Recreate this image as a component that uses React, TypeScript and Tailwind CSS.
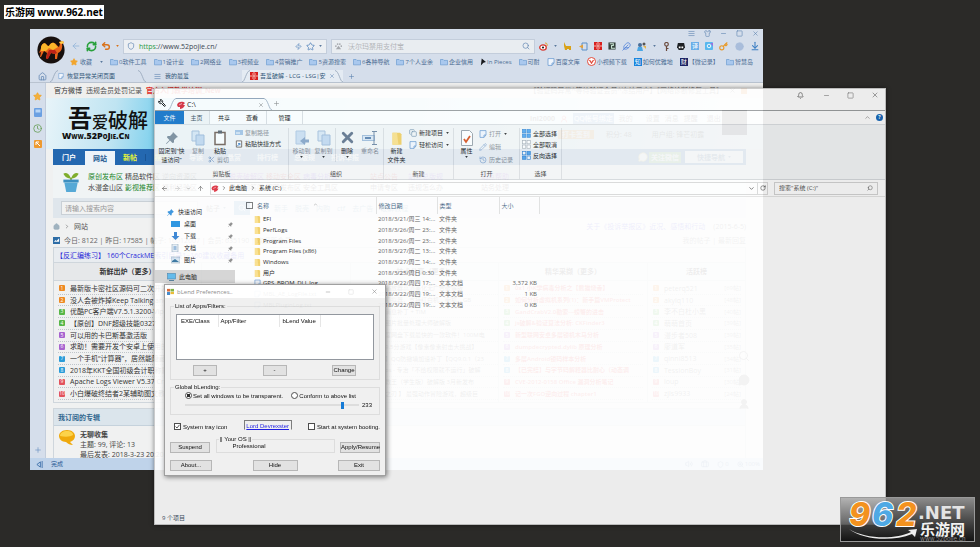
import React from "react";
import {
  AlignJustify, ArrowDownToLine, ArrowLeft, ArrowRight, ArrowUp, Bell, ChevronDown, ChevronRight, ChevronUp,
  Circle, Clock, Feather, Home, Key, Minus, Plus, RefreshCw, RotateCw, Search, Shield, Shirt, Square,
  Star, Undo2, UserRound, Volume2, Wrench, X, Zap, Copy, Scissors, Pencil, History, Briefcase, ZoomIn, MessageCircle,
} from "lucide-react";

const ui = "font-['Open_Sans','Noto_Sans_CJK_SC',sans-serif]";

/* ---------- small drawings ---------- */

function Folder({ yellow = false, className = "w-2 h-2" }: { yellow?: boolean; className?: string }) {
  return yellow ? (
    <svg viewBox="0 0 8 9" className={className}>
      <path d="M1 1h5l1 1v7H1z" fill="#f3cf63" />
      <path d="M1 1h3l1 8H1z" fill="#fbe08a" />
    </svg>
  ) : (
    <svg viewBox="0 0 9 8" className={className}>
      <path d="M.5 1.2h3l1 1h4v5H.5z" fill="#a9c8ee" stroke="#6d9cd0" strokeWidth=".8" />
    </svg>
  );
}

function Page({ className = "w-2 h-2" }: { className?: string }) {
  return (
    <svg viewBox="0 0 8 8" className={className}>
      <path d="M1 .6h6v4.4L5 7.4H1z" fill="#f1f6fd" stroke="#6d9cd0" strokeWidth=".8" />
      <path d="M7 5H5v2.4" fill="none" stroke="#6d9cd0" strokeWidth=".8" />
    </svg>
  );
}

function Caret({ className = "text-[#5a789c]" }: { className?: string }) {
  return (
    <svg viewBox="0 0 4 3" className={`h-[2px] w-[3px] shrink-0 ${className}`}>
      <path d="M0 0h4L2 3z" fill="currentColor" />
    </svg>
  );
}

function CamelLogo() {
  return (
    <svg viewBox="0 0 28 28" className="h-7 w-7">
      <circle cx="14" cy="14" r="13.6" fill="#17100e" />
      <path d="M2 17l2-5c0-3 3-6 5-4 1 1 1 2 3 2 1-2 3-4 5-3 2 0 3 3 5 4l1-3-1-2 4-1 1 2-2 1c1 4-1 8-4 9l-1 6h-2l0-5-4-1-3 5h-2l1-5-3-2-3 6H3l1-5z" fill="#e8641a" />
      <path d="M4 12c0-3 3-6 5-4 1 1 1 2 3 2 1-2 3-4 5-3 2 1 2 3 4 4l-5 3-4-2-3 3-5 0z" fill="#fbb62a" />
      <path d="M12 14l6 0 2 3-2 1-4-1-3 6h-2l1-5z" fill="#bd2317" />
      <path d="M22 6l4-1 1 2-3 1z" fill="#ffd34d" />
    </svg>
  );
}

function RedSwirl({ className = "w-2 h-2" }: { className?: string }) {
  return (
    <svg viewBox="0 0 8 8" className={className}>
      <path d="M0 4C1 0 6 0 8 2L6 4l2 0C7 7 4 8 3 8l0-2-2 0z" fill="#dc2b3a" />
      <path d="M2 4l3-1.500" stroke="#fff" strokeWidth=".6" />
    </svg>
  );
}

function RedGrid({ className = "w-2 h-2" }: { className?: string }) {
  return (
    <svg viewBox="0 0 8 8" className={className}>
      <rect width="8" height="8" fill="#d8201f" />
      <path d="M4 0v8M0 4h8M2 2h1M5 2h1M2 6h1M5 6h1" stroke="#ffdcd6" strokeWidth=".8" />
    </svg>
  );
}

function TabEdge({ left = false }: { left?: boolean }) {
  return (
    <svg viewBox="0 0 8 12" className="h-3 w-2 shrink-0">
      <path d={left ? "M0 12C3 12 4 1 8 .5" : "M0 .5C4 1 5 12 8 12"} fill="none" stroke="#93a3b8" strokeWidth=".8" />
    </svg>
  );
}

function TileIcon({ kind }: { kind: "all" | "none" | "invert" }) {
  const a = kind === "none" ? "#fff" : "#58aaf0";
  const b = kind === "all" ? "#58aaf0" : "#fff";
  const s = kind === "none" ? "#a8b0b8" : "#3b8ad6";
  return (
    <svg viewBox="0 0 9 9" className="h-[9px] w-[9px] shrink-0">
      <g stroke={s} strokeWidth=".7">
        <rect x=".5" y=".5" width="3.3" height="3.3" fill={b} />
        <rect x="5" y=".5" width="3.3" height="3.3" fill={a} />
        <rect x=".5" y="5" width="3.3" height="3.3" fill={a} />
        <rect x="5" y="5" width="3.3" height="3.3" fill={b} />
      </g>
    </svg>
  );
}

/* ---------- browser window ---------- */

const bookmarks: [string, string][] = [
  ["folder", "0软件工具"], ["folder", "1设计业"], ["folder", "2网络业"], ["folder", "3视频业"],
  ["folder", "4营销推广"], ["folder", "5资源搜索"], ["folder", "6各种导航"], ["folder", "7个人业余"],
  ["folder", "企业信用"], ["p", "In Pieces"], ["folder", "可耐"], ["page", "百度文库"],
  ["v", "小视频下载"], ["k", "如何优雅地"], ["c", "【微记录】"], ["folder", "智慧岛"],
];

function BookmarkIcon({ kind }: { kind: string }) {
  if (kind === "folder") return <Folder className="h-2 w-2 shrink-0" />;
  if (kind === "page") return <Page className="h-2 w-2 shrink-0" />;
  if (kind === "p")
    return <svg viewBox="0 0 7 8" className="h-2 w-[6px]"><path d="M1 8L2 0l5 4-3 1z" fill="#16181c" /></svg>;
  if (kind === "v")
    return <svg viewBox="0 0 9 9" className="h-[9px] w-[9px]"><circle cx="4.500" cy="4.500" r="4" fill="#fff" stroke="#e04a3a" /><path d="M2.500 3l2 3 2-3" fill="none" stroke="#e04a3a" strokeWidth="1.300" /></svg>;
  if (kind === "k") return <span className="flex h-2 w-2 items-center justify-center bg-[#1782dc] text-[6px] leading-none text-white">知</span>;
  return <span className="flex h-2 w-2 items-center justify-center bg-[#1b2365] text-[6px] leading-none text-white">财</span>;
}

function BrowserChrome() {
  return (
    <header className="bg-[#d5deeb] text-[#4b6c93]">
      <div className="flex h-[41px]">
        <div className="w-10 shrink-0 pl-[7px] pt-[7px]"><CamelLogo /></div>
        <div className="min-w-0 flex-1">
          <div className="flex h-[9px] items-center justify-end text-[#5d83b0]">
            {[AlignJustify, Shirt, Minus, Square, X].map((I, i) => (
              <button key={i} aria-label="窗口" className="flex w-4 justify-center"><I className="h-[7px] w-[7px]" /></button>
            ))}
          </div>
          <div className="flex h-4 items-center">
            <div className="flex w-[53px] shrink-0 items-center justify-between pl-px pr-1">
              <button aria-label="后退"><ArrowLeft className="h-[10px] w-[10px] text-[#94b4da]" /></button>
              <button aria-label="刷新"><RefreshCw strokeWidth={3.5} className="h-[11px] w-[11px] text-[#27a03a]" /></button>
              <button aria-label="恢复"><Undo2 strokeWidth={3.5} className="h-[10px] w-[10px] text-[#d9731c]" /></button>
              <Caret className="text-[#d9731c]" />
            </div>
            <label className="mr-1 flex h-[15px] w-[204px] shrink-0 items-center border border-[#c3cddb] bg-[#eceff3] pl-[3px] pr-1">
              <Shield className="mr-1 h-2 w-2 text-[#5d83b0]" />
              <span className="text-[7px] leading-none text-[#2d9b46]">https</span>
              <input aria-label="地址" defaultValue="://www.52pojie.cn/" className="w-20 min-w-0 flex-1 bg-transparent text-[7px] leading-none text-[#3b4652] outline-none" />
              <Zap className="h-[7px] w-[7px] text-[#4d7fb8]" />
              <Star className="mx-1 h-[9px] w-[9px] text-[#4d7fb8]" />
              <Caret />
            </label>
            <label className="flex h-[15px] w-[204px] shrink-0 items-center border border-[#c3cddb] bg-[#e9edf1] pl-[3px] pr-1">
              <svg viewBox="0 0 8 8" className="h-[7px] w-[7px]"><g fill="#a5a8ad"><circle cx="1" cy="3.500" r="1" /><circle cx="3" cy="1.200" r="1" /><circle cx="5.500" cy="1.200" r="1" /><circle cx="7.200" cy="3.500" r="1" /><path d="M4 3l3 4H1z" /></g></svg>
              <input aria-label="搜索" placeholder="沃尔玛禁用支付宝" className="ml-[6px] min-w-0 flex-1 bg-transparent text-[7px] leading-none outline-none placeholder:text-[#b3b5b9]" />
              <Search className="h-2 w-2 text-[#5d83b0]" />
            </label>
            <div className="flex flex-1 items-center justify-between pl-1 pr-[3px]">
              <svg viewBox="0 0 9 9" className="h-[9px] w-[9px]"><ellipse cx="4" cy="5.500" rx="3.300" ry="2.600" fill="#fff" stroke="#d83a32" strokeWidth="1.300" /><circle cx="4" cy="5.500" r="1.100" fill="#222" /><path d="M6 1c2 0 2.500 1 2 3" stroke="#e8a02c" fill="none" /></svg>
              <Caret />
              <svg viewBox="0 0 9 9" className="h-[9px] w-[9px]"><path d="M1 0l2 4h5v4H6V7H4v1H2L1 4z" fill="#d9a117" /></svg>
              <svg viewBox="0 0 9 9" className="h-[9px] w-[9px]"><path d="M3 1h5v7H3z" fill="none" stroke="#5b8fc8" /><path d="M0 4.500l4-2v4z" fill="#e2a03a" /></svg>
              <RedGrid className="h-2 w-2" />
              <svg viewBox="0 0 9 9" className="h-2 w-2"><rect x=".5" y=".5" width="8" height="8" fill="#34413c" /><path d="M2 2h4v2H4v3h4" fill="none" stroke="#c9e4d3" strokeWidth="1.200" /></svg>
              <Feather className="h-[9px] w-[9px] text-[#4d7fd8]" />
              <svg viewBox="0 0 9 9" className="h-[9px] w-[9px]"><circle cx="3" cy="3" r="2" fill="#4a6e98" /><circle cx="7" cy="2" r="1.500" fill="#555" /><path d="M0 9l1-4h4l1 4z" fill="#4aa7e4" /><path d="M6 4h3v3z" fill="#e3b64c" /></svg>
              <Caret />
              <svg viewBox="0 0 9 9" className="h-[9px] w-[9px]"><circle cx="4.500" cy="2.300" r="1.800" fill="none" stroke="#6b4a3c" strokeWidth="1.200" /><path d="M4.500 4v5M4.500 6.500h2" stroke="#6b4a3c" strokeWidth="1.200" /></svg>
              <svg viewBox="0 0 9 9" className="h-2 w-2"><path d="M1 1l7 0 1 5-2 3H2L0 6z" fill="#1d2024" /><path d="M2 5h2v2H2zM5 5h2v2H5z" fill="#fff" /></svg>
              <span className="flex h-2 w-2 items-center justify-center bg-[#6aaee8] text-[6px] leading-none text-white">译</span>
              <svg viewBox="0 0 9 9" className="h-2 w-2"><rect width="9" height="9" rx="1" fill="#58b8ee" /><circle cx="4.500" cy="4.500" r="2" fill="none" stroke="#fff" /><path d="M6 1h3v4z" fill="#9a6fe0" /></svg>
              <Key strokeWidth={3} className="h-[9px] w-[9px] text-[#e89a2a]" />
              <Circle className="h-[9px] w-[9px] fill-[#a9bddb] text-[#a9bddb]" />
              <ArrowDownToLine strokeWidth={2.5} className="h-[10px] w-[10px] text-[#3d7fc4]" />
            </div>
          </div>
          <nav className="flex h-[15px] items-center justify-between pr-[10px] text-[6px] leading-none">
            <a href="#fav" className="flex items-center gap-[2px]"><Star className="h-2 w-2 fill-[#f2a52c] text-[#f2a52c]" />收藏<span className="w-1" /><Caret /></a>
            {bookmarks.map(([k, t]) => (
              <a key={t} href="#b" className="flex items-center gap-px whitespace-nowrap"><BookmarkIcon kind={k} />{t}</a>
            ))}
          </nav>
        </div>
      </div>
      <div className="flex h-[13px] items-end border-b border-[#b9c3d0] text-[6px] leading-none text-[#2f5577]">
        <button aria-label="主页" className="flex h-3 w-5 items-center justify-center pl-1"><Home className="h-[9px] w-[9px] text-[#5d83b0]" /></button>
        <div className="flex h-3 w-24 items-center"><TabEdge left /><Page className="mr-[3px] h-2 w-[6px]" /><span className="flex-1">恢复异常关闭页面</span><TabEdge /></div>
        <div className="flex h-3 w-24 items-center pl-2"><AlignJustify className="mr-1 h-[7px] w-[7px] text-[#5d83b0]" /><span className="flex-1">我的最爱</span></div>
        <div className="flex h-3 w-[101px] items-center bg-[#e4ebf3]"><TabEdge left /><RedGrid className="mr-[2px] h-2 w-2 shrink-0" /><span className="flex-1 whitespace-nowrap">吾爱破解 - LCG - LSG|安</span><X className="h-[6px] w-[6px] shrink-0 text-[#5d83b0]" /><TabEdge /></div>
        <button aria-label="新标签" className="flex h-3 w-4 items-center justify-center"><Plus className="h-[7px] w-[7px] text-[#5d83b0]" /></button>
      </div>
    </header>
  );
}

const badge = ["bg-[#ee8a22]", "bg-[#ee8a22]", "bg-[#57b647]", "bg-[#57b647]", "bg-[#a763cf]", "bg-[#a763cf]", "bg-[#299bd8]", "bg-[#299bd8]", "bg-[#e2535d]", "bg-[#e2535d]"];
const fresh = ["最新版卡密社区源码可二次开发", "没人会被炸掉Keep Talking and No", "优酷PC客户端V7.5.1.3200-Vip去广", "【原创】DNF超级技能0327", "可以用的卡巴斯基激活版", "求助！需要开发个安卓上使用的软件", "一个手机“计算器”，居然能隐藏文件", "2018年KKT全国初级会计职称题库", "Apache Logs Viewer V5.37 Crack", "小白爆破终结者2某辅助图文教程"];
const tech = ["播放器高清美化无广告破解版", "模拟器，支持红白机、街机、GB", "消息补丁 + TIM", "图片批量处理大师破解版", "度网盘下载最快的一款软件！100M电", "9.5分游戏【像素像素射击大挑战】", "】QQ防撤墙加速补丁【QQ9.0.1（23", "ps - 专治「不给权限就不运行」破解", "教王（学生版）破解版 3月新发布", "之刃 】 最强动作冒险游戏，超级巨"];
const best = ["0x1 小K学病毒分析之【熊猫烧香】", "如何分析虚拟机系列(1)：新手篇VMProtect", "GandCrabV2.0勒索---螃蟹的进击", "js破解&验证算法分析: CKFinder3", "新型联网安卓多层锁机木马分析", "dumpdecrypted.dylib 原理分析", "多层Android锁码样本分析", "【已完结】与字节码解释器比耐心（动态调", "CVE-2012-0158 Office 漏洞分析笔记", "记一次FGO逆向过程 chapter1"];
const active: [string, string][] = [["peterq521", "[69帖]"], ["akylq110", "[48帖]"], ["李不白杜小黑", "[40帖]"], ["萌萌首页", "[39帖]"], ["漫步者508", "[39帖]"], ["廖道军", "[35帖]"], ["qinni8513", "[34帖]"], ["TessionBoy", "[31帖]"], ["loup", "[30帖]"], ["zjls9933", "[24帖]"]];

function RankList({ title, rows, className, text, indent }: { title: string; rows: (string | [string, string])[]; className: string; text: string; indent?: boolean }) {
  return (
    <section className={`shrink-0 border-r border-[#cfd6dc] ${className}`}>
      <h3 className="flex h-[18px] items-center justify-center border-b border-[#cfd6dc] bg-[#e6e8ea] text-[7px] font-bold text-[#333]">{title}</h3>
      <ol className={`flex h-[121px] flex-col py-[2px] ${indent ? "pl-[34px]" : "pl-1 pr-1"}`}>
        {rows.map((r, i) => (
          <li key={i} className="flex flex-1 items-center overflow-hidden border-b border-dotted border-[#bfc5ca] whitespace-nowrap">
            {!indent && <span className={`mr-[5px] ml-px flex h-[6px] w-[6px] shrink-0 items-center justify-center rounded-[1px] text-[5px] leading-none text-white ${badge[i]}`}>{i + 1}</span>}
            <a href="#t" className={`leading-none ${text}`}>{typeof r === "string" ? r : r[0]}</a>
            {typeof r !== "string" && <span className="ml-auto text-[6px] text-[#777]">{r[1]}</span>}
          </li>
        ))}
      </ol>
    </section>
  );
}

function ForumPage() {
  return (
    <main className="relative min-w-0 flex-1 overflow-hidden bg-[#f0f1f1] text-[7px] leading-none text-[#444]">
      <div className="flex h-[15px] items-center bg-[#efefee] pl-2 pr-4">
        <a href="#a" className="mr-1 text-[#333]">官方微博</a><a href="#b" className="mr-1 text-[#555]">违规会员处罚记录</a>
        <a href="#c" className="font-bold text-[#e0302a]">官方入门教学培训_New</a>
        <span className="ml-auto mr-[6px] text-[#666]">【验证码异常^等待验证会员^冻结用户】【网络诊断修复工具】</span>
        <X className="h-[7px] w-[7px]" /><span className="ml-[5px] h-[6px] w-[6px] bg-[#e6822c]" />
      </div>
      <div className="flex h-[51px] justify-between bg-[linear-gradient(100deg,#e8f4f9_0px,#bfe4f2_70px,#86d3ee_110px,#a8dff0_260px,#c9ecf6_480px,#eef6f9_700px)] pl-4 pr-4">
        <div className="pt-[9px]">
          <div className="flex items-end pl-[6px] font-['Liberation_Serif','Noto_Sans_CJK_SC',serif] leading-none text-[#111]">
            <span className="text-[24px] font-bold">吾</span><span className="text-[16px] font-medium">爱</span><span className="text-[20px] font-medium">破解</span>
          </div>
          <div className="font-['Open_Sans',sans-serif] text-[9px] font-extrabold leading-[10px] text-[#111] [font-variant:small-caps]">Www.52PoJie.Cn</div>
        </div>
        <div className="flex pt-3">
          <div className="w-[192px] pt-[3px]">
            <div className="flex items-center gap-[5px]"><b>ini2000</b><UserRound className="h-2 w-2 text-[#d33]" /><span className="bg-[#4a86c0] px-px py-[2px] text-white">QQ帐号绑定</span><span>我的</span><span className="ml-2">设置</span><span>消息</span><span>提醒</span><span className="ml-1">退出</span></div>
            <div className="mt-[6px] flex items-center pl-7"><span className="mr-3 bg-[#f29b38] px-1 py-px font-bold text-white">打卡签到</span><span className="mr-5">积分: 48</span><span>用户组: 锋芒初露</span></div>
          </div>
          <div className="h-[25px] w-[25px] bg-[#3c3a41]" />
        </div>
      </div>
      <div className="mx-[7px] mr-[17px]">
        <nav className="flex h-4 items-center bg-[#2468b0] font-bold text-white">
          <a href="#1" className="w-8 text-center">门户</a>
          <a href="#2" className="flex h-[14px] w-[30px] items-center justify-center self-end bg-[#eef4f9] text-[#245a90]">网站</a>
          <a href="#3" className="w-[30px] text-center text-[#e8f53a]">新帖</a>
          <a href="#4" className="w-8 border-l border-[#1a5596] text-center text-[#e8f53a]">搜索</a>
          <a href="#5" className="ml-3">导读</a><a href="#6" className="ml-6">悬赏</a><a href="#7" className="ml-4">排行榜</a><a href="#8" className="ml-4">总版规</a><a href="#9" className="ml-4">投诉举报</a>
          <span className="ml-auto mr-1 flex items-center"><MessageCircle className="h-[10px] w-3 fill-white text-[#e9c34c]" /><span className="bg-[#6fb55b] p-[2px]">关注微信</span></span>
          <button className="mr-[3px] flex h-3 w-[58px] items-center justify-center gap-[3px] bg-[#f5f8fb] text-[#44688c]">快捷导航<Caret /></button>
        </nav>
        <div className="flex h-[33px] items-center bg-[#f0f4f5]">
          <svg viewBox="0 0 18 22" className="ml-[9px] mr-2 h-[21px] w-[18px] shrink-0"><path d="M9 8C7 2 3 1 1 3c2 4 5 5 8 5zM9 8c2-6 6-7 8-5-2 4-5 5-8 5z" fill="#7fae2c" /><path d="M9 7v3" stroke="#6e9a25" strokeWidth="1.500" /><path d="M1 9h16v3H1z" fill="#3d8fc0" /><path d="M2 12h14l-2 10H4z" fill="#56a9d6" /></svg>
          <div className="grid grid-cols-[repeat(11,max-content)] gap-x-[2px] gap-y-1 whitespace-nowrap">
            <a href="#a" className="text-[#23852b]">原创发布区</a><a href="#b">精品软件区</a><a href="#c">逆向资源区</a><span className="w-7" />
            <a href="#d" className="text-[#a03ad8]">脱壳破解区</a><a href="#e" className="text-[#e0302a]">移动安全区</a><a href="#f" className="text-[#7a3ae8]">病毒分析区</a><span className="w-7" />
            <a href="#g" className="mr-2 text-[#e0302a]">站点公告</a><a href="#h" className="mr-9 text-[#7a3ae8]">站点总版规</a><a href="#i" className="text-[#a03ad8]">站点帮助</a>
            <a href="#j">水漫金山区</a><a href="#k" className="text-[#23852b]">影视推荐区</a><a href="#l">福利经验区</a><span />
            <a href="#m">悬赏问答区</a><a href="#n">招聘发布区</a><a href="#o">安全工具区</a><span />
            <a href="#p">申请专区</a><a href="#q">违规怎么办</a><a href="#r">站务处理</a>
          </div>
        </div>
        <div className="flex h-5 items-center bg-[#dfe6ec] pl-2">
          <input aria-label="请输入搜索内容" placeholder="请输入搜索内容" className="h-[14px] w-[137px] border border-[#c9d0d6] bg-[#f1f2f2] pl-[3px] text-[7px] outline-none placeholder:text-[#999]" />
          <span className="mx-2 flex items-center gap-[3px]">帖子<Caret /></span>
          <button aria-label="搜索" className="flex h-[14px] w-4 items-center justify-center bg-[#3a80bd] text-white"><Search className="h-2 w-2" /></button>
          <span className="ml-6 flex gap-[7px] text-[#47769c]"><span>新手</span><span>脱壳</span><span>内购</span><span>ctf</span><span>去广告</span><span>破解教程</span></span>
        </div>
        <div className="flex h-4 items-center gap-1 text-[#555]"><Home className="h-[7px] w-[7px] fill-[#9fb2bf] text-[#9fb2bf]" /><ChevronRight className="h-[7px] w-[6px]" />网站
          <span className="ml-auto text-[#3a3ad8]">关于《投诉举报区》近况、感悟和行动</span><span className="ml-1">(2015-6-5)</span></div>
        <div className="flex h-[13px] items-center whitespace-nowrap text-[#666]">
          <span className="mr-1 flex h-[7px] w-[7px] items-end bg-[#2e6da6]"><svg viewBox="0 0 8 8" className="h-2 w-2"><path d="M1 6l2-2 1 1 3-3v4z" fill="#fff" /></svg></span>
          今日: 8122 | 昨日: 17585 | 帖子: 16012607 | 会员: 635190 | 欢迎新会员<span className="ml-auto">我的帖子 | 最新回复</span>
        </div>
        <div className="flex h-4 items-center border border-[#cfd6dc] bg-[#e8ecf0] pl-[2px] text-[#2828d8]"><a href="#n">【反汇编练习】 160个CrackME索引目录1~160建议收藏备用</a></div>
        <div className="flex border-b border-l border-[#cfd6dc]">
          <RankList title="新鲜出炉（更多）" rows={fresh} className="w-[148px]" text="text-[7px] text-[#333]" />
          <div className="w-[149px] shrink-0 border-r border-[#cfd6dc]"><div className="h-[18px] bg-[#e6e8ea]" /></div>
          <RankList title="技术分享（更多）" rows={tech} className="w-[148px]" text="text-[6px] text-[#444]" indent />
          <RankList title="精华采撷（更多）" rows={best} className="w-[149px]" text="text-[6px] font-semibold text-[#e03a3a]" />
          <RankList title="活跃榜" rows={active} className="w-[98px]" text="text-[7px] text-[#555]" />
        </div>
        <section className="mt-[5px] border border-[#cfd6dc]">
          <h3 className="flex h-[17px] items-center border-b border-[#c5d2dc] bg-[#dbe5ec] pl-1 text-[7px] font-bold text-[#31678f]">我订阅的专辑</h3>
          <div className="flex pl-[5px] pt-1">
            <svg viewBox="0 0 16 15" className="mr-[5px] h-[15px] w-4"><path d="M8 0c5 0 8 3 8 6s-2 5-5 6l3 3c-3 0-5-1-7-3-4 0-7-3-7-6s3-6 8-6z" fill="#efa90c" /><path d="M8 1c4 0 6 2 6 4-3 2-8 2-13 1 0-3 3-5 7-5z" fill="#fcd34a" /></svg>
            <div className="leading-[10px]"><b className="block">无聊收集</b><span className="block">主题: 99, 评论: 13</span><span className="block">最后发表: 2018-3-23 20:20</span></div>
          </div>
        </section>
      </div>
      <div className="absolute right-[13px] bottom-[48px] flex flex-col gap-3 text-[#777]"><Search className="h-3 w-3" /><MessageCircle className="h-3 w-3 fill-current" /><UserRound className="h-3 w-3 fill-current" /></div>
    </main>
  );
}

function Browser() {
  return (
    <div className={`absolute left-[30px] top-[29px] flex h-[441px] w-[733px] flex-col overflow-hidden bg-[#d5deeb] ${ui}`}>
      <BrowserChrome />
      <div className="flex min-h-0 flex-1">
        <aside className="flex w-4 shrink-0 flex-col items-center gap-[7px] border-r border-[#c3cddb] pb-1 pt-[9px]">
          <Star className="h-[9px] w-[9px] fill-[#f2b03c] text-[#f2a52c]" />
          <svg viewBox="0 0 8 9" className="h-[9px] w-2"><rect width="8" height="9" rx="1" fill="#6ba0e2" /><path d="M1.500 1.500h5v3h-5z" fill="#b9d6f6" /></svg>
          <Clock className="h-[9px] w-[9px] text-[#5d9a4a]" />
          <svg viewBox="0 0 8 8" className="h-2 w-2"><rect width="8" height="8" rx="1" fill="#ee9a30" /><path d="M2 2l4 4M2 5V2h3" stroke="#fff" fill="none" /></svg>
          <Plus className="mt-auto h-2 w-2 text-[#6b93c2]" />
        </aside>
        <ForumPage />
      </div>
      <footer className="flex h-3 items-center bg-[#bfd3ea] pl-[6px] pr-[3px] text-[6px] leading-none text-[#2a5a94]">
        <svg viewBox="0 0 8 8" className="mr-2 h-[7px] w-[7px]"><path d="M5 1v6L1 4zM7 0v8" fill="none" stroke="#3b6ea8" /></svg>完成
        <div className="ml-auto flex items-center gap-2"><Volume2 className="h-2 w-2" /><Briefcase className="h-2 w-2" /><span className="flex"><Shield className="mr-px h-[7px] w-[7px]" />0</span><span className="flex"><ZoomIn className="mr-px h-[7px] w-[7px]" />100%</span></div>
      </footer>
    </div>
  );
}

/* ---------- file explorer window ---------- */

function BigButton({ icon, label, dim, caret, className }: { icon: React.ReactNode; label: string; dim?: boolean; caret?: boolean; className: string }) {
  return (
    <button className={`flex shrink-0 flex-col items-center text-[6px] leading-[9px] ${dim ? "text-[#8c9197]" : "text-[#222]"} ${className}`}>
      <span className="flex h-[19px] items-center">{icon}</span>
      <span className="whitespace-pre-line">{label}</span>
      {caret && <Caret className="text-[#333]" />}
    </button>
  );
}

function SmallButton({ icon, label, dim, caret }: { icon: React.ReactNode; label: string; dim?: boolean; caret?: boolean }) {
  return (
    <button className={`flex items-center gap-[2px] whitespace-nowrap text-[6px] leading-none ${dim ? "text-[#8c9197]" : "text-[#222]"}`}>
      {icon}{label}{caret && <Caret className="ml-px text-[#333]" />}
    </button>
  );
}

function Group({ title, className, children }: { title: string; className: string; children: React.ReactNode }) {
  return (
    <div className={`flex shrink-0 flex-col border-r border-[#dcdfe2] ${className}`}>
      <div className="flex min-h-0 flex-1">{children}</div>
      <div className="h-[9px] text-center text-[6px] leading-[9px] text-[#444]">{title}</div>
    </div>
  );
}

/* The push pin that marks quick-access entries. */
function PinIcon({ className }: { className: string }) {
  return (
    <svg viewBox="0 0 12 12" className={className}>
      <path d="M7 0l5 5-1.500.5-2.500 2.500v2.500L6.500 11 4 8.500.5 12 0 11.500 3.500 8 1 5.500 1.500 4H4l2.500-2.500z" fill="currentColor" />
    </svg>
  );
}

function Ribbon() {
  const copy = <svg viewBox="0 0 14 16" className="h-4 w-[14px]"><path d="M1 1h7v10H1z" fill="#dbe8f5" stroke="#a9c1dc" /><path d="M5 5h8v10H5z" fill="#c6daf0" stroke="#a2bddb" /></svg>;
  return (
    <div className="flex h-[55px] shrink-0 border-b border-[#d5d9dc] bg-[#f4f6f7] pt-[3px]">
      <Group title="剪贴板" className="w-[134px]">
        <BigButton className="w-[33px]" icon={<PinIcon className="h-3 w-3 text-[#7f8e9c]" />} label={"固定到“快\n速访问”"} />
        <BigButton className="w-5" dim icon={copy} label="复制" />
        <div className="w-6 shrink-0">
          <BigButton className="w-6" icon={<svg viewBox="0 0 12 15" className="h-4 w-3"><path d="M1 2h10v12H1z" fill="#fff" stroke="#76645a" strokeWidth="1.500" /><path d="M4 0h4v3H4z" fill="#5d6670" /></svg>} label="粘贴" />
          <SmallButton dim icon={<Scissors className="h-[7px] w-[7px] text-[#7d9cc4]" />} label="剪切" />
        </div>
        <div className="flex flex-col gap-1 pl-[3px] pt-[2px]">
          <SmallButton dim icon={<svg viewBox="0 0 8 6" className="h-[6px] w-2"><rect width="8" height="5" fill="#a8c6e6" /><path d="M1 3h4" stroke="#fff" /></svg>} label="复制路径" />
          <SmallButton icon={<svg viewBox="0 0 8 9" className="h-2 w-2"><path d="M1 1h6v7H1z" fill="#fff" stroke="#6b5f56" /><path d="M2 7l3-3M3 4h2v2" stroke="#2b74c4" fill="none" /></svg>} label="粘贴快捷方式" />
        </div>
      </Group>
      <Group title="组织" className="w-[95px]">
        <BigButton className="ml-[2px] w-[21px]" dim caret icon={<svg viewBox="0 0 15 16" className="h-4 w-[15px]"><path d="M2 1h9v13H2z" fill="#cfe0f2" stroke="#b2c9e2" /><path d="M6 11l5-4v2.500h4v3h-4V15z" fill="#8aa6c8" /></svg>} label="移动到" />
        <BigButton className="w-[23px]" dim caret icon={copy} label="复制到" />
        <span className="mb-2 border-l border-[#dcdfe2]" />
        <BigButton className="w-[22px]" caret icon={<X strokeWidth={4} className="h-[17px] w-[17px] text-[#64768e]" />} label="删除" />
        <BigButton className="w-6" dim icon={<svg viewBox="0 0 16 14" className="h-[14px] w-4"><rect x=".5" y="4.500" width="12" height="5" fill="#dbe8f5" stroke="#a2bddb" /><path d="M3 7h6" stroke="#5e84b0" strokeWidth="2" /><path d="M12 1v12M10 .500h5M10 13.500h5" stroke="#7189a5" /></svg>} label="重命名" />
      </Group>
      <Group title="新建" className="w-[70px]">
        <BigButton className="w-[25px]" icon={<Folder yellow className="h-4 w-3" />} label={"新建\n文件夹"} />
        <div className="flex flex-col gap-1 pt-px">
          <SmallButton caret icon={<Copy className="h-2 w-2 text-[#6f8fab]" />} label="新建项目" />
          <SmallButton caret icon={<Page className="h-2 w-2" />} label="轻松访问" />
        </div>
      </Group>
      <Group title="打开" className="w-[66px]">
        <BigButton className="w-[25px]" caret icon={<svg viewBox="0 0 12 16" className="h-4 w-3"><path d="M.5.5h8l3 3v12H.5z" fill="#fff" stroke="#9aa3ab" /><path d="M3 9l2 3 4-6" fill="none" stroke="#d9531f" strokeWidth="1.800" /></svg>} label="属性" />
        <div className="flex flex-col gap-[5px] pt-[2px]">
          <SmallButton dim caret icon={<Page />} label="打开" />
          <SmallButton dim icon={<Pencil className="h-2 w-2 text-[#86a8d0]" />} label="编辑" />
          <SmallButton dim icon={<History className="h-2 w-2 text-[#86a8d0]" />} label="历史记录" />
        </div>
      </Group>
      <Group title="选择" className="w-[42px]">
        <div className="flex flex-col gap-[2px] pl-[2px] pt-px">
          <SmallButton icon={<TileIcon kind="all" />} label="全部选择" />
          <SmallButton icon={<TileIcon kind="none" />} label="全部取消" />
          <SmallButton icon={<TileIcon kind="invert" />} label="反向选择" />
        </div>
      </Group>
    </div>
  );
}

const files: [string, string, string, string][] = [
  ["EFI", "2018/3/21/周三 14:...", "文件夹", ""],
  ["PerfLogs", "2018/3/26/周一 23:...", "文件夹", ""],
  ["Program Files", "2018/3/26/周一 23:...", "文件夹", ""],
  ["Program Files (x86)", "2018/3/27/周二 13:...", "文件夹", ""],
  ["Windows", "2018/3/27/周二 14:...", "文件夹", ""],
  ["用户", "2018/3/25/周日 0:30", "文件夹", ""],
  ["GPS_BROM_DLL.log", "2018/3/22/周四 17:...", "文本文档", "3,372 KB"],
  ["MBL_AE_LogFile.txt", "2018/3/22/周四 19:...", "文本文档", "1 KB"],
  ["MBLPluginLog.txt", "2018/3/22/周四 19:...", "文本文档", "0 KB"],
];

function QuickIcon({ kind }: { kind: string }) {
  return (
    <svg viewBox="0 0 9 8" className="h-2 w-[9px]">
      {kind === "桌面" && <rect y="1" width="9" height="6" fill="#1e8fe0" />}
      {kind === "下载" && <path d="M3 0h3v4h2.500l-4 4-4-4H3z" fill="#2f7fd2" />}
      {kind === "文档" && <><path d="M1 0h6v8H1z" fill="#e6eef5" stroke="#8fa6ba" strokeWidth=".6" /><path d="M2.500 3h3M2.500 5h3" stroke="#4b87c4" /></>}
      {kind === "图片" && <><rect y="1" width="9" height="6" fill="#d9e8f2" stroke="#93a9b8" strokeWidth=".6" /><path d="M1 5l3-2 4 3H1z" fill="#2d6f9c" /></>}
      {kind === "此电脑" && <><rect x=".5" y=".5" width="8" height="5.500" fill="#58b7ec" stroke="#3f7ea8" strokeWidth=".6" /><path d="M2 7.500h5" stroke="#4f7c99" /></>}
    </svg>
  );
}

function Explorer() {
  return (
    <div className={`absolute left-[154px] top-[88px] flex h-[437px] w-[732px] flex-col border border-[#c9c9c9] bg-white text-[6px] leading-none text-[#111] opacity-[0.914] shadow-[0_0_4px_rgba(0,0,0,0.5)] ${ui}`}>
      <div className="flex h-[22px] shrink-0 items-end border-b border-[#9a9d9f]">
        <Wrench strokeWidth={3} className="mb-[3px] ml-[3px] mr-[2px] h-2 w-2 -scale-x-100" />
        <TabEdge left />
        <div className="flex h-3 w-[88px] items-center border-t border-[#93a3b8] pl-px text-[7px]"><RedSwirl className="mr-[2px] h-2 w-2" />C:\<X className="ml-auto h-[6px] w-[6px] text-[#777]" /></div>
        <TabEdge />
        <Plus className="mb-[3px] ml-px h-[7px] w-[7px] text-[#888]" />
        <div className="ml-auto flex self-start pr-[2px] pt-[2px] text-[#777]">
          <button aria-label="通知" className="mr-[6px] w-5"><Bell className="h-[7px] w-[7px] text-[#444]" /></button>
          <button aria-label="最小化" className="w-6"><Minus className="h-[7px] w-[7px]" /></button>
          <button aria-label="最大化" className="w-6"><Square className="h-[7px] w-[7px]" /></button>
          <button aria-label="关闭" className="w-3"><X className="h-2 w-2" /></button>
        </div>
      </div>
      <div className="flex h-[14px] shrink-0 items-center border-b border-[#dcdfe2]">
        <button className="h-full w-[29px] bg-[#1874c8] text-white">文件</button>
        <button className="h-full w-[26px] border-r border-[#dcdfe2] bg-[#f4f6f7] text-[#3a4e62]">主页</button>
        <button className="w-7">共享</button><button className="w-7">查看</button>
        <button className="h-full w-[37px] border-x border-[#dcdfe2]">管理</button>
        <ChevronUp className="ml-auto mr-[5px] h-[7px] w-[7px] text-[#777]" />
        <span className="mr-[2px] flex h-[7px] w-[7px] items-center justify-center rounded-full bg-[#1567ba] text-[5px] font-bold text-white">?</span>
      </div>
      <Ribbon />
      <div className="flex h-[17px] shrink-0 items-center border-b border-[#e3e3e3] text-[#555]">
        <div className="flex w-[55px] items-center justify-between px-[6px]">
          <ArrowLeft className="h-[7px] w-[7px]" /><ArrowRight className="h-[7px] w-[7px] text-[#c4c4c4]" /><ChevronDown className="h-[5px] w-[5px]" /><ArrowUp className="h-[7px] w-[7px]" />
        </div>
        <div className="flex h-[13px] min-w-0 flex-1 items-center border border-[#d9d9d9] text-[#222]">
          <RedSwirl className="h-[7px] w-2" /><ChevronRight className="mx-[2px] h-[6px] w-[6px]" />此电脑<ChevronRight className="mx-[3px] h-[6px] w-[6px]" />系统 (C:)
          <ChevronDown className="ml-auto mr-[2px] h-[7px] w-[7px]" /><span className="flex h-full w-[10px] items-center justify-center border-l border-[#d9d9d9]"><RotateCw className="h-[6px] w-[6px]" /></span>
        </div>
        <label className="ml-[6px] mr-[7px] flex h-[13px] w-[104px] items-center border border-[#d3d3d3] px-1"><input aria-label="搜索系统" placeholder={'搜索"系统 (C:)"'} className="min-w-0 flex-1 bg-transparent outline-none placeholder:text-[#555]" /><Search className="h-[6px] w-[6px] -scale-x-100" /></label>
      </div>
      <div className="flex min-h-0 flex-1">
        <nav className="w-20 shrink-0 pt-[9px]">
          <a href="#q" className="flex h-3 items-center gap-1 pl-3"><PinIcon className="h-[7px] w-[7px] text-[#2f8fdd]" />快速访问</a>
          {["桌面", "下载", "文档", "图片"].map((t) => (
            <a key={t} href="#d" className="flex h-3 items-center gap-1 pl-4 pr-[2px]"><QuickIcon kind={t} />{t}<PinIcon className="ml-auto h-[5px] w-[5px] text-[#888]" /></a>
          ))}
          <a href="#pc" className="mt-1 flex h-[13px] items-center gap-[3px] bg-[#d5d5d5] pl-3"><QuickIcon kind="此电脑" />此电脑</a>
        </nav>
        <div className="flex-1 pl-[3px]">
          <table className="h-[113px] w-[301px] table-fixed border-collapse text-left">
            <thead className="text-[#476684]">
              <tr className="h-[17px]">
                <th className="w-[138px] border-r border-[#e2e2e2] font-normal"><label className="flex items-center gap-1 pl-2"><input type="checkbox" className="h-[7px] w-[7px] appearance-none border border-[#777]" />名称<ChevronUp className="ml-10 h-[5px] w-[5px] self-start text-[#777]" /></label></th>
                <th className="w-[61px] border-r border-[#e2e2e2] pl-[2px] font-normal">修改日期</th>
                <th className="w-[62px] border-r border-[#e2e2e2] pl-[2px] font-normal">类型</th>
                <th className="w-10 border-r border-[#e2e2e2] pl-[2px] font-normal">大小</th>
              </tr>
            </thead>
            <tbody className="text-[#555]">
              {files.map(([n, d, t, s], i) => (
                <tr key={n}>
                  <td className="text-[#111]"><span className="flex items-center gap-[2px] pl-4">{i < 6 ? <Folder yellow className="h-2 w-[7px]" /> : <Page className="h-2 w-[7px]" />}{n}</span></td>
                  <td className="whitespace-nowrap pl-[2px]">{d}</td><td className="pl-[2px]">{t}</td><td className="whitespace-nowrap pr-[2px] text-right">{s}</td>
                </tr>
              ))}
            </tbody>
          </table>
        </div>
      </div>
      <div className="h-[10px] pl-[7px] leading-[8px] text-[#3a4e62]">9 个项目</div>
    </div>
  );
}

/* ---------- bLend preferences dialog ---------- */

const btn = "h-[11px] border border-[#b4b4b4] bg-[#e1e1e1] text-center leading-[9px]";
const radio = "h-[7px] w-[7px] appearance-none rounded-full border border-[#444] bg-white checked:bg-[radial-gradient(circle,#222_40%,#fff_45%)]";

function BlendDialog() {
  return (
    <div className="absolute left-[164px] top-[284px] flex h-[192px] w-[222px] flex-col border border-[#9b9b9b] bg-[#f0f0f0] font-['Liberation_Sans',sans-serif] text-[6px] leading-none text-black opacity-95 shadow-[1px_1px_5px_rgba(0,0,0,0.55)]">
      <div className={`flex h-[13px] shrink-0 items-center bg-white pl-[2px] text-[6px] text-[#888] ${ui}`}>
        <svg viewBox="0 0 8 8" className="mr-[3px] h-[7px] w-[7px]"><path d="M0 1h3.500v3H0z" fill="#d9642e" /><path d="M4 1h4v3H4z" fill="#7cae3b" /><path d="M0 4.500h3.500V8H0z" fill="#3f86c9" /><path d="M4 4.500h4V7H4z" fill="#e9b92e" /></svg>
        <span className="flex-1">bLend Preferences..</span>
        <button aria-label="最小化" className="w-[23px]"><Minus className="h-[6px] w-[6px]" /></button>
        <button aria-label="最大化" className="w-[23px]"><Square className="h-[6px] w-[6px] text-[#ddd]" /></button>
        <button aria-label="关闭" className="w-[14px]"><X className="h-[7px] w-[7px]" /></button>
      </div>
      <div className="flex flex-1 flex-col px-[5px] pt-[5px]">
        <fieldset className="h-[77px] border border-[#dcdcdc] px-[5px]">
          <legend className="-ml-[2px] px-px">List of Apps/Filters:</legend>
          <div className="mt-[5px] h-[46px] border border-[#8d9299] bg-white">
            <table className="w-full table-fixed text-left"><thead><tr className="h-3">
              <th className="w-[41px] border-r border-[#e5e5e5] pl-1 font-normal">EXE/Class</th><th className="w-[61px] border-r border-[#e5e5e5] pl-[2px] font-normal">App/Filter</th><th className="w-[41px] border-r border-[#e5e5e5] pl-[3px] font-normal">bLend Value</th><th />
            </tr></thead></table>
          </div>
          <div className="mt-[5px] flex justify-between pl-[17px] pr-[18px]"><button className={`w-6 ${btn}`}>+</button><button className={`w-6 ${btn}`}>-</button><button className={`w-6 ${btn}`}>Change</button></div>
        </fieldset>
        <fieldset className="mt-1 h-[31px] border border-[#dcdcdc] pl-[14px] pr-[7px]">
          <legend className="-ml-[11px] px-px">Global bLending:</legend>
          <div className="mt-[2px] flex items-center justify-between pr-4">
            <label className="flex items-center gap-px"><input type="radio" name="mode" defaultChecked className={radio} />Set all windows to be transparent.</label>
            <label className="flex items-center gap-px"><input type="radio" name="mode" className={radio} />Conform to above list</label>
          </div>
          <label className="mt-[2px] flex h-2 items-center gap-[3px]">
            <input type="range" aria-label="233" min={0} max={255} defaultValue={233} className="h-[7px] min-w-0 flex-1 appearance-none bg-transparent [&::-webkit-slider-runnable-track]:h-[2px] [&::-webkit-slider-runnable-track]:bg-[#dcdcdc] [&::-webkit-slider-thumb]:mt-[-2px] [&::-webkit-slider-thumb]:h-[7px] [&::-webkit-slider-thumb]:w-[3px] [&::-webkit-slider-thumb]:appearance-none [&::-webkit-slider-thumb]:bg-[#0a74d4]" />
            233
          </label>
        </fieldset>
        <div className="mt-[5px] flex h-[13px] items-center justify-between pl-1">
          <label className="flex items-center gap-[2px]"><input type="checkbox" defaultChecked className="peer hidden" /><span className="flex h-[7px] w-[7px] items-center border border-[#444] bg-white"><svg viewBox="0 0 5 5"><path d="M.5 2.500l1.500 1.500L4.500.8" fill="none" stroke="#222" strokeWidth=".8" /></svg></span>System tray icon</label>
          <a href="#lord" className="mb-1 h-[10px] w-12 border border-[#777] border-b-[#eee] text-center leading-[10px] text-[#1414e0] underline">Lord Devrexster</a>
          <label className="flex items-center gap-[2px]"><input type="checkbox" className="h-[7px] w-[7px] appearance-none border border-[#444] bg-white" />Start at system booting.</label>
        </div>
        <div className="flex h-5 items-end justify-between">
          <button className={`w-10 ${btn}`}>Suspend</button>
          <fieldset className="h-[17px] w-[119px] border border-[#dcdcdc] pl-4"><legend className="-ml-[14px] px-px">|| Your OS ||</legend><div className="mt-px">Professional</div></fieldset>
          <button className={`w-10 whitespace-nowrap ${btn}`}>Apply/Resume</button>
        </div>
        <div className="mt-[7px] flex justify-between"><button className={`w-[42px] ${btn}`}>About...</button><button className={`w-[45px] ${btn}`}>Hide</button><button className={`w-[42px] ${btn}`}>Exit</button></div>
      </div>
    </div>
  );
}

/* ---------- site mark ---------- */

function SiteMark() {
  return (
    <div className="absolute bottom-[5px] right-[5px] h-[45px] w-[135px] border border-[#999] bg-linear-to-b from-[#a5a5a5]/80 via-[#555]/80 to-[#111]/90">
      <svg viewBox="0 0 133 43" className="h-full w-full font-['Inter','Noto_Sans_CJK_SC',sans-serif]">
        <g fontSize="32" fontWeight="800" fontStyle="italic" stroke="#fff" strokeWidth="2" paintOrder="stroke">
          <text x="8" y="28" fill="#f3921f">9</text><text x="31" y="28" fill="#4fa9e4">6</text><text x="55" y="28" fill="#f3921f">2</text>
        </g>
        <text x="77" y="21" fontSize="18" fontWeight="700" fill="#e4e4e4" className="font-['DejaVu_Sans',sans-serif]">.NET</text>
        <path d="M8 31c16 10 46 11 62 3l-3-2 9-1-2 8-3-3c-20 8-49 6-63-5z" fill="#eee" />
        <text x="79" y="37" fontSize="15" fontWeight="700" fill="#f2f2f2">乐游网</text>
        <text x="79" y="43" fontSize="6" fill="#888">www.52pojie.cn</text>
      </svg>
    </div>
  );
}

export default function App() {
  return (
    <div className="relative h-screen w-full overflow-hidden bg-[#2b2a28]">
      <Browser />
      <Explorer />
      <BlendDialog />
      <SiteMark />
      <div className="absolute left-1 top-[5px] whitespace-nowrap bg-white px-px font-['Open_Sans','Noto_Sans_CJK_SC',sans-serif] text-[10px] font-bold leading-[14px] text-black">乐游网 www.962.net</div>
    </div>
  );
}
